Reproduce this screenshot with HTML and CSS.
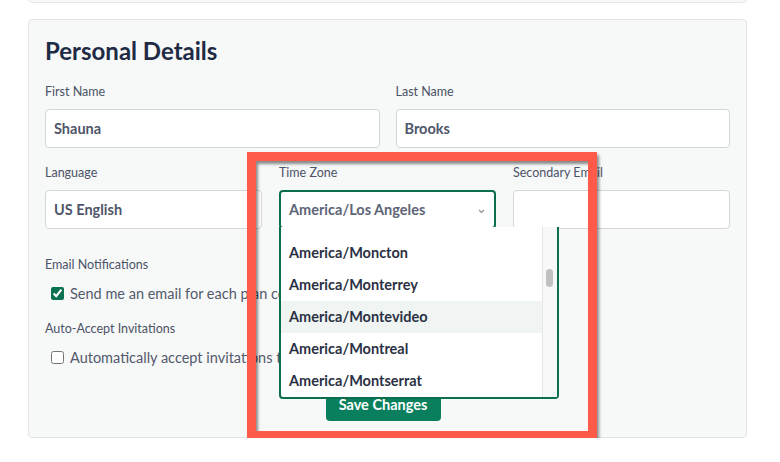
FILE: index.html
```html
<!DOCTYPE html>
<html lang="en">
<head>
<meta charset="UTF-8">
<meta name="viewport" content="width=device-width, initial-scale=1.0">
<title>Personal Details</title>
<link rel="stylesheet" href="styles.css">
</head>
<body>

<div class="top-card"></div>

<div class="card">
  <h2>Personal Details</h2>

  <div class="row row-two">
    <div class="field">
      <label>First Name</label>
      <div class="input">Shauna</div>
    </div>
    <div class="field">
      <label>Last Name</label>
      <div class="input">Brooks</div>
    </div>
  </div>

  <div class="row row-three">
    <div class="field">
      <label>Language</label>
      <div class="input">US English</div>
    </div>
    <div class="field">
      <label>Time Zone</label>
      <div class="select-wrap">
        <div class="input select open">
          America/Los Angeles
          <svg class="chevron" width="7" height="5" viewBox="0 0 7 5"><path d="M1 1l2.5 2.5L6 1" fill="none" stroke="#8b9099" stroke-width="1.2"/></svg>
        </div>
        <div class="dropdown">
          <ul class="options">
            <li>America/Moncton</li>
            <li>America/Monterrey</li>
            <li class="hover">America/Montevideo</li>
            <li>America/Montreal</li>
            <li>America/Montserrat</li>
          </ul>
          <div class="scroll-track"><div class="scroll-thumb"></div></div>
        </div>
      </div>
    </div>
    <div class="field">
      <label>Secondary Email</label>
      <div class="input"></div>
    </div>
  </div>

  <div class="group">
    <label>Email Notifications</label>
    <div class="check-row">
      <input type="checkbox" checked>
      <span>Send me an email for each plan comment</span>
    </div>
  </div>

  <div class="group">
    <label>Auto-Accept Invitations</label>
    <div class="check-row">
      <input type="checkbox">
      <span>Automatically accept invitations to plans</span>
    </div>
  </div>

  <div class="actions">
    <button class="btn-save">Save Changes</button>
  </div>

  <div class="annotation"></div>
</div>

</body>
</html>
```

FILE: styles.css
```css
/* Settings page */
body {
  font-family: 'Lato', 'Open Sans', sans-serif;
  margin: 0;
  padding: 0;
  background: #fff;
  color: #4b5366;
}

.top-card {
  width: 719px;
  height: 43px;
  margin: -40px 0 0 28px;
  box-sizing: border-box;
  border: 1px solid #e6e8e8;
  border-radius: 4px;
  background: #f7f8f8;
}

.card {
  position: relative;
  width: 719px;
  margin: 16px 0 0 28px;
  box-sizing: border-box;
  padding: 16px;
  background: #f7f8f8;
  border: 1px solid #e4e6e6;
  border-radius: 4px;
}

h2 {
  margin: 0 0 19px 0;
  font-size: 24px;
  line-height: 29px;
  font-weight: 700;
  color: #1f2b45;
}

label {
  display: block;
  font-size: 12.5px;
  line-height: 16px;
  color: #4b5366;
  margin-bottom: 9px;
}

.row {
  display: grid;
  margin-bottom: 17px;
}

.row-two {
  grid-template-columns: 1fr 1fr;
  gap: 16px;
}

.row-three {
  grid-template-columns: 1fr 1fr 1fr;
  gap: 17px;
  margin-bottom: 28px;
}

.input {
  height: 39px;
  box-sizing: border-box;
  border: 1px solid #d3d6da;
  border-radius: 4px;
  background: #fff;
  padding: 0 8px;
  display: flex;
  align-items: center;
  font-size: 14.5px;
  font-weight: 700;
  color: #4f5669;
}

.select-wrap {
  position: relative;
}

.select {
  border: 2px solid #0b6e4f;
  color: #5e6577;
  position: relative;
}

.chevron {
  position: absolute;
  right: 9px;
  top: 17px;
}

.dropdown {
  position: absolute;
  left: 0;
  top: calc(100% - 2px);
  width: 280px;
  height: 172px;
  box-sizing: border-box;
  border: 2px solid #0b6e4f;
  border-top: 0;
  border-radius: 0 0 4px 4px;
  background: #fff;
  display: flex;
  z-index: 2;
}

.options {
  list-style: none;
  margin: 0;
  padding: 10px 0 0 0;
  flex: 1;
}

.options li {
  height: 32px;
  line-height: 32px;
  padding-left: 8px;
  font-size: 14.5px;
  font-weight: 700;
  color: #2b3144;
}

.options li.hover {
  background: #f0f5f3;
}

.scroll-track {
  width: 14px;
  background: #f8f8f8;
  border-left: 1px solid #e6e6e6;
}

.scroll-thumb {
  width: 7px;
  height: 18px;
  margin: 42px 0 0 3px;
  border-radius: 4px;
  background: #c1c1c1;
}

.group {
  margin-bottom: 18px;
}

.group label {
  margin-bottom: 10px;
}

.check-row {
  display: flex;
  align-items: center;
  height: 20px;
  font-size: 14.5px;
  color: #535a6c;
  white-space: nowrap;
}

.check-row input {
  width: 13px;
  height: 13px;
  margin: 0 6px 0 6px;
  accent-color: #0a7152;
}

.actions {
  display: flex;
  justify-content: center;
  padding-right: 9px;
  margin-top: 21px;
}

.btn-save {
  width: 115px;
  height: 33px;
  border: 0;
  border-radius: 4px;
  background: #0a7f5e;
  color: #fff;
  font-family: inherit;
  font-size: 14.5px;
  font-weight: 700;
  padding: 0;
}

.annotation {
  position: absolute;
  left: 218px;
  top: 132px;
  width: 350px;
  height: 288px;
  box-sizing: border-box;
  border: 9px solid #fd5a4a;
  box-shadow: 2px 3px 3px rgba(0, 0, 0, 0.45), inset 2px 3px 3px rgba(0, 0, 0, 0.45);
  pointer-events: none;
  z-index: 3;
}
```
